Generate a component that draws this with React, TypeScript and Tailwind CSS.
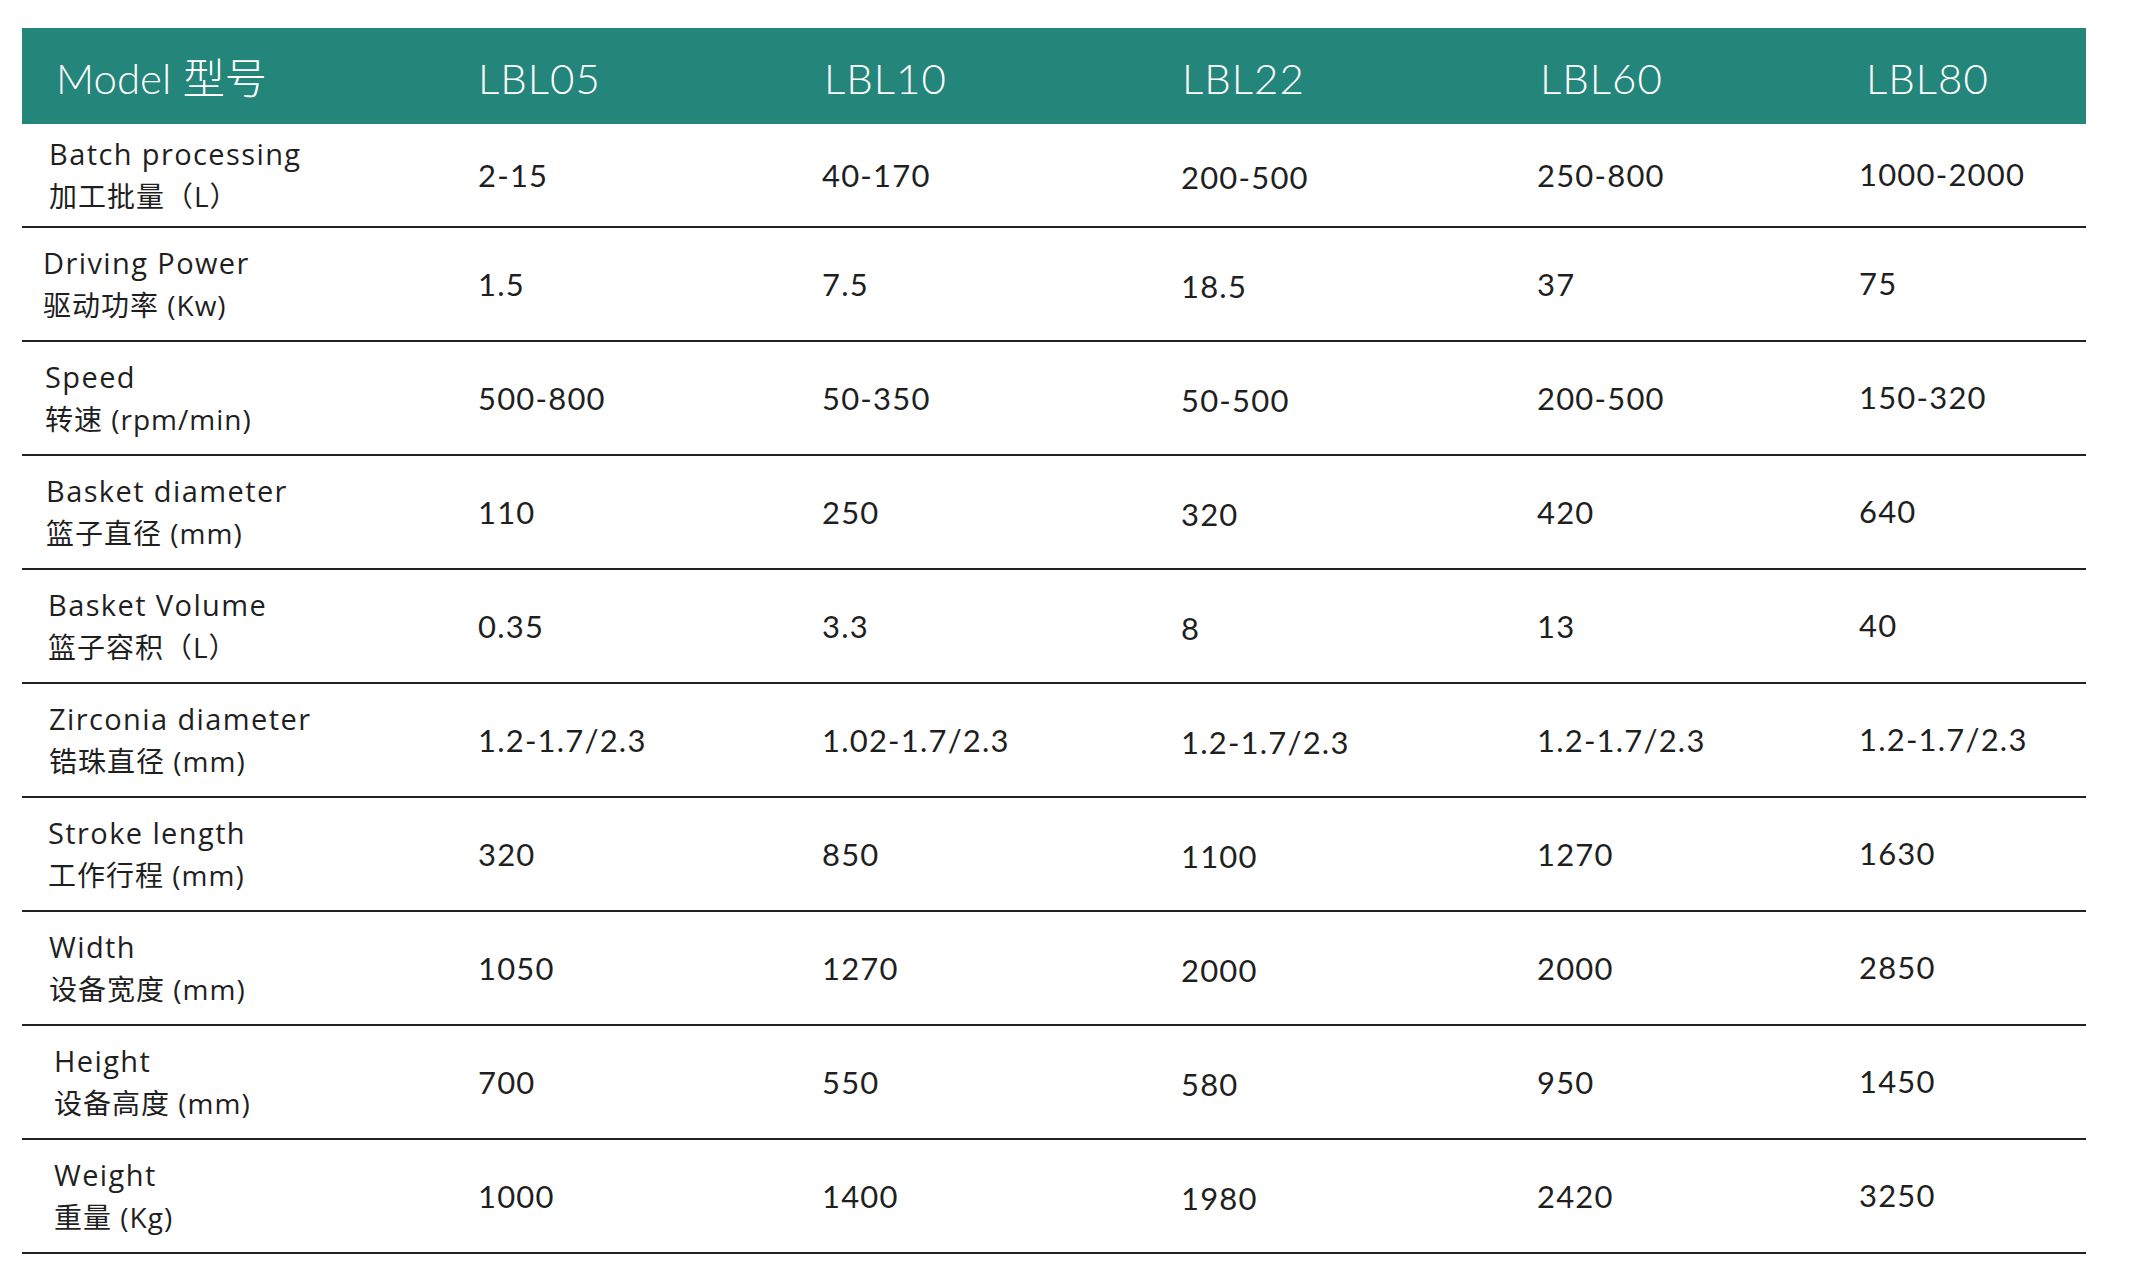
import React from 'react';

interface SpecRow {
  en: string;
  zh: string;
  values: string[];
  indent: string;
}

const MODELS = ['LBL05', 'LBL10', 'LBL22', 'LBL60', 'LBL80'];

/** header labels sit a few px off the column starts in the original */
const HEAD_OFFSETS = ['pl-0', 'pl-[2px]', 'pl-[1px]', 'pl-[3px]', 'pl-[7px]'];

/** LBL22 column sits a bit lower, LBL80 a bit higher */
const CELL_SHIFT = ['', '', 'translate-y-[2px]', '', '-translate-y-[1px]'];

const ROWS: SpecRow[] = [
  { en: 'Batch processing', zh: '加工批量（L）', values: ['2-15', '40-170', '200-500', '250-800', '1000-2000'], indent: 'pl-[27px]' },
  { en: 'Driving Power', zh: '驱动功率 (Kw)', values: ['1.5', '7.5', '18.5', '37', '75'], indent: 'pl-[21px]' },
  { en: 'Speed', zh: '转速 (rpm/min)', values: ['500-800', '50-350', '50-500', '200-500', '150-320'], indent: 'pl-[23px]' },
  { en: 'Basket diameter', zh: '篮子直径 (mm)', values: ['110', '250', '320', '420', '640'], indent: 'pl-[24px]' },
  { en: 'Basket Volume', zh: '篮子容积（L）', values: ['0.35', '3.3', '8', '13', '40'], indent: 'pl-[26px]' },
  { en: 'Zirconia diameter', zh: '锆珠直径 (mm)', values: ['1.2-1.7/2.3', '1.02-1.7/2.3', '1.2-1.7/2.3', '1.2-1.7/2.3', '1.2-1.7/2.3'], indent: 'pl-[27px]' },
  { en: 'Stroke length', zh: '工作行程 (mm)', values: ['320', '850', '1100', '1270', '1630'], indent: 'pl-[26px]' },
  { en: 'Width', zh: '设备宽度 (mm)', values: ['1050', '1270', '2000', '2000', '2850'], indent: 'pl-[27px]' },
  { en: 'Height', zh: '设备高度 (mm)', values: ['700', '550', '580', '950', '1450'], indent: 'pl-[32px]' },
  { en: 'Weight', zh: '重量 (Kg)', values: ['1000', '1400', '1980', '2420', '3250'], indent: 'pl-[32px]' },
];

const GRID = 'grid grid-cols-[456px_344px_359px_356px_322px_1fr] items-center';

export default function App() {
  return (
    <div className="min-h-[1284px] w-full bg-white font-['Lato','Noto_Sans_CJK_SC',sans-serif] text-[#1f1f1f]">
      <div className="ml-[22px] w-[2064px] pt-[28px]">
        {/* Header */}
        <div className={`${GRID} h-[96px] bg-[#24857a] pt-[4px] text-[42px] font-light tracking-[1px] text-white`}>
          <div className="pl-[34px] tracking-normal">Model 型号</div>
          {MODELS.map((m, i) => (
            <div key={m} className={HEAD_OFFSETS[i]}>
              {m}
            </div>
          ))}
        </div>

        {/* Spec rows */}
        {ROWS.map((row, idx) => (
          <div
            key={row.en}
            className={`${GRID} border-b-2 border-[#222] ${idx === 0 ? 'h-[104px]' : 'h-[114px]'}`}
          >
            <div className={`${row.indent} font-['Open_Sans','Noto_Sans_CJK_SC',sans-serif] leading-[42px]`}>
              <div className="text-[29px] tracking-[1.4px]">{row.en}</div>
              <div className="text-[28px] tracking-[1px]">{row.zh}</div>
            </div>
            {row.values.map((v, i) => (
              <div key={i} className={`text-[31px] tracking-[1.2px] ${CELL_SHIFT[i]}`}>
                {v}
              </div>
            ))}
          </div>
        ))}
      </div>
    </div>
  );
}
